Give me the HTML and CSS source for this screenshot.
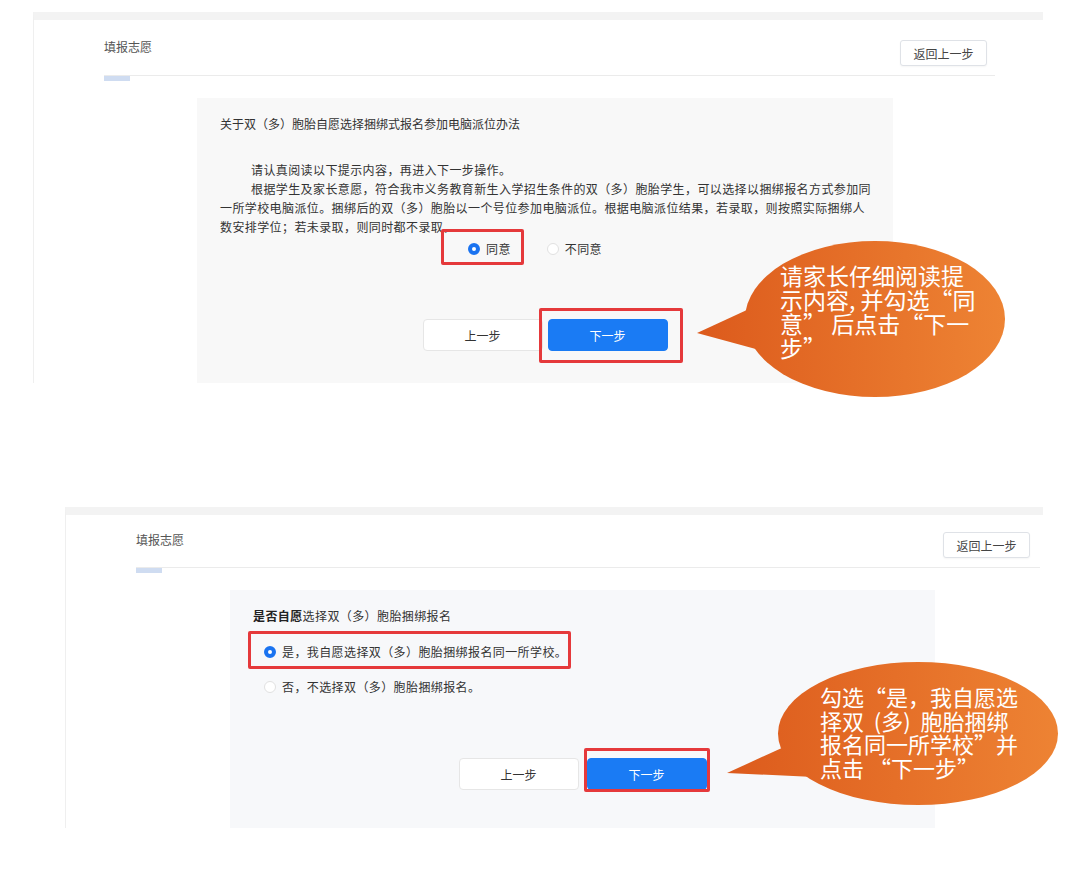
FILE: index.html
```html
<!DOCTYPE html>
<html lang="zh-CN">
<head>
    <meta charset="UTF-8">
    <meta name="viewport" content="width=device-width, initial-scale=1.0">
    <title>填报志愿</title>
    <link rel="stylesheet" href="styles.css">
</head>
<body>

    <!-- Step 1: read the notice and agree -->
    <div class="shot shot-1">
        <div class="head">
            <span class="head-title">填报志愿</span>
            <button class="btn-back">返回上一步</button>
        </div>
        <div class="tab"></div>

        <div class="panel panel-1">
            <div class="panel-title">关于双（多）胞胎自愿选择捆绑式报名参加电脑派位办法</div>
            <div class="notice">
                <p>请认真阅读以下提示内容，再进入下一步操作。</p>
                <p>根据学生及家长意愿，符合我市义务教育新生入学招生条件的双（多）胞胎学生，可以选择以捆绑报名方式参加同<br>一所学校电脑派位。捆绑后的双（多）胞胎以一个号位参加电脑派位。根据电脑派位结果，若录取，则按照实际捆绑人<br>数安排学位；若未录取，则同时都不录取。</p>
            </div>
            <div class="radio-row">
                <span class="radio checked">
                    <span class="dot"></span>同意
                    <span class="mark mark-agree"></span>
                </span>
                <span class="radio">
                    <span class="dot"></span>不同意
                </span>
            </div>
            <div class="actions actions-1">
                <button class="btn">上一步</button>
                <span class="btn-wrap">
                    <button class="btn btn-primary">下一步</button>
                    <span class="mark mark-next-1"></span>
                </span>
            </div>
        </div>

        <div class="bubble bubble-1">
            <svg width="315" height="160" viewBox="0 0 315 160">
                <defs>
                    <linearGradient id="orange1" x1="0" y1="0" x2="315" y2="0" gradientUnits="userSpaceOnUse">
                        <stop offset="0" stop-color="#dc5a1c"/>
                        <stop offset="1" stop-color="#ee8434"/>
                    </linearGradient>
                </defs>
                <path d="M2 93 L54 69 L72 112 Z" fill="url(#orange1)"/>
                <ellipse cx="180" cy="79" rx="130" ry="78" fill="url(#orange1)"/>
            </svg>
            <div class="bubble-text bubble-text-1">请家长仔细阅读提<br>示内容, 并勾选“同<br>意” 后点击“下一<br>步”</div>
        </div>
    </div>

    <!-- Step 2: choose bundled registration -->
    <div class="shot shot-2">
        <div class="head">
            <span class="head-title">填报志愿</span>
            <button class="btn-back">返回上一步</button>
        </div>
        <div class="tab"></div>

        <div class="panel panel-2">
            <div class="panel-title"><b>是否自愿</b>选择双（多）胞胎捆绑报名</div>
            <div class="options">
                <span class="radio checked">
                    <span class="dot"></span>是，我自愿选择双（多）胞胎捆绑报名同一所学校。
                    <span class="mark mark-yes"></span>
                </span>
                <span class="radio">
                    <span class="dot"></span>否，不选择双（多）胞胎捆绑报名。
                </span>
            </div>
            <div class="actions actions-2">
                <button class="btn">上一步</button>
                <span class="btn-wrap">
                    <button class="btn btn-primary">下一步</button>
                    <span class="mark mark-next-2"></span>
                </span>
            </div>
        </div>

        <div class="bubble bubble-2">
            <svg width="345" height="160" viewBox="0 0 345 160">
                <defs>
                    <linearGradient id="orange2" x1="0" y1="0" x2="345" y2="0" gradientUnits="userSpaceOnUse">
                        <stop offset="0" stop-color="#dc5a1c"/>
                        <stop offset="1" stop-color="#ee8434"/>
                    </linearGradient>
                </defs>
                <path d="M5 118 L62 92 L92 122 Z" fill="url(#orange2)"/>
                <ellipse cx="196" cy="78.5" rx="140" ry="71.5" fill="url(#orange2)"/>
            </svg>
            <div class="bubble-text bubble-text-2">勾选“是，我自愿选<br>择双&nbsp; (多)&nbsp; 胞胎捆绑<br>报名同一所学校”并<br>点击 “下一步”</div>
        </div>
    </div>

</body>
</html>
```

FILE: styles.css
```css
* {
    box-sizing: border-box;
}
body {
    margin: 0;
    padding-top: 12px;
    background-color: #fff;
    font-family: "Noto Sans CJK SC", "Noto Sans", sans-serif;
    font-size: 12px;
    color: #333;
}
p {
    margin: 0;
}
button {
    font-family: inherit;
    cursor: pointer;
}

/* screenshot frames */
.shot {
    position: relative;
    border-top: 8px solid #f3f3f3;
    border-left: 1px solid #efefef;
}
.shot-1 {
    margin-left: 33px;
    width: 1010px;
    padding: 0 48px 0 70px;
}
.shot-2 {
    margin-top: 124px;
    margin-left: 65px;
    width: 978px;
    padding: 0 3px 0 70px;
}

/* header */
.head {
    display: flex;
    justify-content: space-between;
    align-items: flex-start;
    border-bottom: 1px solid #ebebeb;
}
.shot-1 .head {
    height: 56px;
    padding-top: 19px;
}
.shot-2 .head {
    height: 53px;
    padding-top: 17px;
}
.head-title {
    line-height: 16px;
    color: #555;
}
.btn-back {
    width: 87px;
    height: 26px;
    padding: 0;
    background-color: #fff;
    border: 1px solid #dfe2e7;
    border-radius: 3px;
    font-size: 12px;
    color: #444;
    box-shadow: 0 1px 2px rgba(0, 0, 0, 0.04);
}
.shot-1 .btn-back {
    margin-top: 1px;
    margin-right: 8px;
}
.shot-2 .btn-back {
    margin-right: 10px;
}
.tab {
    width: 26px;
    height: 5px;
    background-color: #cfdcf1;
}

/* grey content panel */
.panel {
    margin-top: 17px;
    padding-left: 23px;
    padding-right: 10px;
}
.panel-1 {
    margin-left: 93px;
    width: 696px;
    height: 285px;
    padding-top: 16px;
    background-color: #f8f8f8;
}
.panel-2 {
    margin-left: 94px;
    width: 705px;
    height: 238px;
    padding-top: 16px;
    background-color: #f7f8fa;
}
.panel-title {
    line-height: 19px;
    color: #333;
}
.panel-2 .panel-title {
    letter-spacing: 0.4px;
}
.panel-2 .panel-title b {
    font-weight: 700;
    color: #222;
}
.notice {
    margin-top: 27px;
    line-height: 19px;
    letter-spacing: 0.4px;
    white-space: nowrap;
}
.notice p {
    text-indent: 31px;
}

/* radios */
.radio {
    position: relative;
    display: inline-flex;
    align-items: center;
    gap: 6px;
    line-height: 19px;
    letter-spacing: 0.4px;
}
.dot {
    width: 12px;
    height: 12px;
    border-radius: 50%;
    background-color: #fff;
    border: 1px solid #e1e1e1;
}
.radio.checked .dot {
    border: 4px solid #1a73f0;
}
.radio-row {
    display: flex;
    gap: 36px;
    margin-top: 3px;
    padding-left: 248px;
}
.options {
    display: flex;
    flex-direction: column;
    align-items: flex-start;
    gap: 16px;
    margin-top: 17px;
    padding-left: 11px;
}

/* buttons */
.actions {
    display: flex;
    justify-content: center;
}
.actions-1 {
    gap: 5px;
    margin-top: 61px;
    padding-right: 13px;
}
.actions-2 {
    gap: 8px;
    margin-top: 62px;
    padding-right: 13px;
}
.btn {
    width: 120px;
    height: 32px;
    padding: 0;
    background-color: #fff;
    border: 1px solid #e6e6e6;
    border-radius: 4px;
    font-size: 12px;
    color: #333;
}
.btn-primary {
    background-color: #1a7bf4;
    border-color: #1a7bf4;
    color: #fff;
}
.btn-wrap {
    position: relative;
    display: inline-flex;
}

/* red annotation frames */
.mark {
    position: absolute;
    border: 3px solid #e5393b;
    border-radius: 2px;
    pointer-events: none;
}
.mark-agree {
    top: -10px;
    bottom: -7px;
    left: -27px;
    right: -13px;
}
.mark-next-1 {
    top: -11px;
    bottom: -12px;
    left: -9px;
    right: -15px;
}
.mark-yes {
    top: -11px;
    bottom: -8px;
    left: -16px;
    right: -4px;
}
.mark-next-2 {
    top: -10px;
    bottom: -2px;
    left: -3px;
    right: -3px;
}

/* orange call-outs */
.bubble {
    position: absolute;
}
.bubble svg {
    display: block;
}
.bubble-1 {
    left: 661px;
    top: 220px;
}
.bubble-2 {
    left: 656px;
    top: 140px;
}
.bubble-text {
    position: absolute;
    color: #fff;
    white-space: nowrap;
}
.bubble-text-1 {
    left: 85px;
    top: 23px;
    font-size: 23px;
    line-height: 24px;
}
.bubble-text-2 {
    left: 98px;
    top: 30px;
    font-size: 22px;
    line-height: 23.5px;
}
```
